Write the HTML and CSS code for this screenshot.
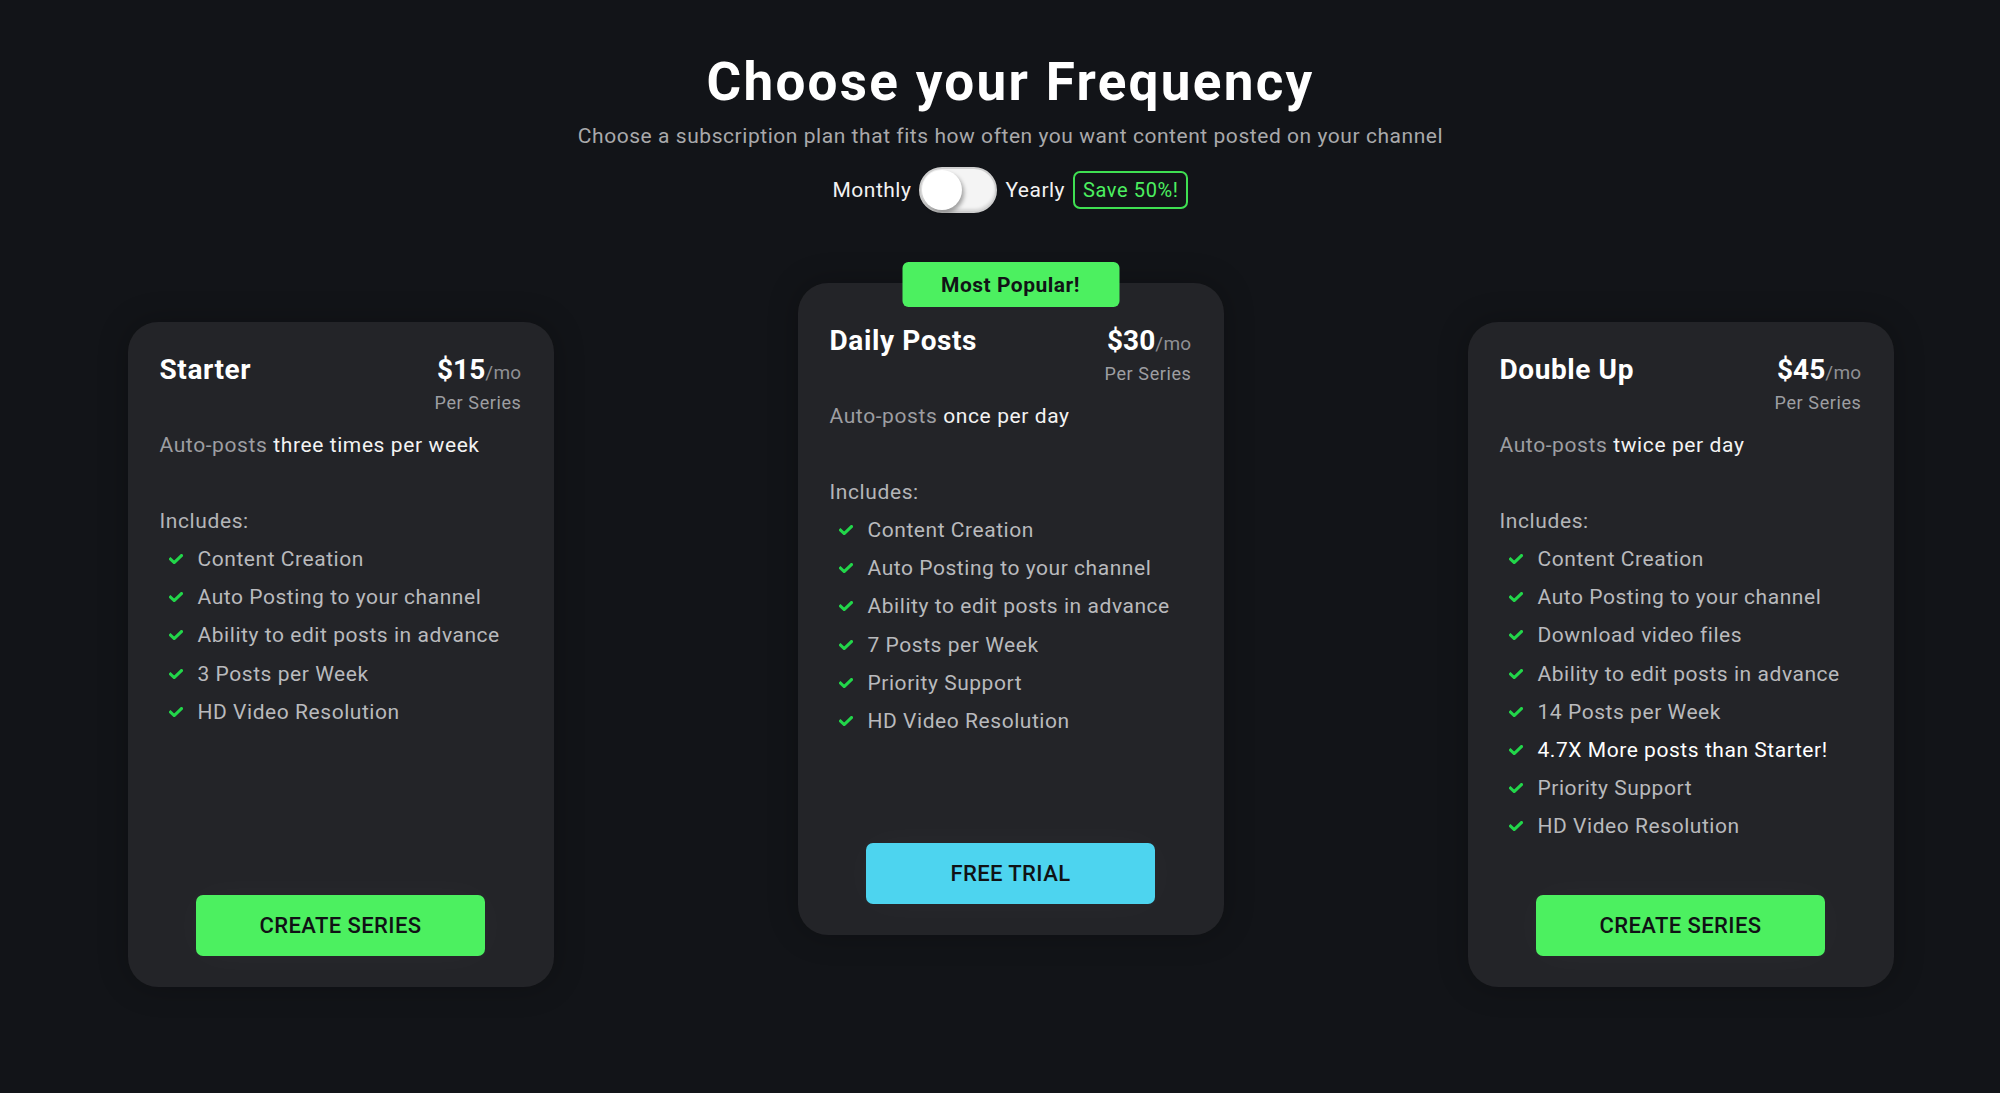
FILE: index.html
```html
<!DOCTYPE html>
<html lang="en">
<head>
<meta charset="utf-8">
<title>Choose your Frequency</title>
<link rel="stylesheet" href="styles.css">
</head>
<body>
<main class="page">
  <header class="hero">
    <h1 class="hero-title">Choose your Frequency</h1>
    <p class="hero-sub">Choose a subscription plan that fits how often you want content posted on your channel</p>
    <div class="billing">
      <span class="billing-label">Monthly</span>
      <span class="switch"><span class="switch-knob"></span></span>
      <span class="billing-label">Yearly</span>
      <span class="save">Save 50%!</span>
    </div>
  </header>

  <section class="plans">
    <article class="plan plan-side">
      <div class="plan-head">
        <h2 class="plan-name">Starter</h2>
        <div class="plan-price">
          <div class="price-line"><span class="price-amt">$15</span><span class="price-per">/mo</span></div>
          <div class="price-note">Per Series</div>
        </div>
      </div>
      <p class="plan-desc"><span class="muted">Auto-posts</span> three times per week</p>
      <p class="plan-inc">Includes:</p>
      <ul class="features">
        <li class="feature"><svg class="check" viewBox="0 0 14 10"><path d="M1.5 5.2 L5.2 8.6 L12.5 1.5"/></svg>Content Creation</li>
        <li class="feature"><svg class="check" viewBox="0 0 14 10"><path d="M1.5 5.2 L5.2 8.6 L12.5 1.5"/></svg>Auto Posting to your channel</li>
        <li class="feature"><svg class="check" viewBox="0 0 14 10"><path d="M1.5 5.2 L5.2 8.6 L12.5 1.5"/></svg>Ability to edit posts in advance</li>
        <li class="feature"><svg class="check" viewBox="0 0 14 10"><path d="M1.5 5.2 L5.2 8.6 L12.5 1.5"/></svg>3 Posts per Week</li>
        <li class="feature"><svg class="check" viewBox="0 0 14 10"><path d="M1.5 5.2 L5.2 8.6 L12.5 1.5"/></svg>HD Video Resolution</li>
      </ul>
      <button class="cta cta-green">CREATE SERIES</button>
    </article>

    <article class="plan plan-main">
      <div class="badge">Most Popular!</div>
      <div class="plan-head">
        <h2 class="plan-name">Daily Posts</h2>
        <div class="plan-price">
          <div class="price-line"><span class="price-amt">$30</span><span class="price-per">/mo</span></div>
          <div class="price-note">Per Series</div>
        </div>
      </div>
      <p class="plan-desc"><span class="muted">Auto-posts</span> once per day</p>
      <p class="plan-inc">Includes:</p>
      <ul class="features">
        <li class="feature"><svg class="check" viewBox="0 0 14 10"><path d="M1.5 5.2 L5.2 8.6 L12.5 1.5"/></svg>Content Creation</li>
        <li class="feature"><svg class="check" viewBox="0 0 14 10"><path d="M1.5 5.2 L5.2 8.6 L12.5 1.5"/></svg>Auto Posting to your channel</li>
        <li class="feature"><svg class="check" viewBox="0 0 14 10"><path d="M1.5 5.2 L5.2 8.6 L12.5 1.5"/></svg>Ability to edit posts in advance</li>
        <li class="feature"><svg class="check" viewBox="0 0 14 10"><path d="M1.5 5.2 L5.2 8.6 L12.5 1.5"/></svg>7 Posts per Week</li>
        <li class="feature"><svg class="check" viewBox="0 0 14 10"><path d="M1.5 5.2 L5.2 8.6 L12.5 1.5"/></svg>Priority Support</li>
        <li class="feature"><svg class="check" viewBox="0 0 14 10"><path d="M1.5 5.2 L5.2 8.6 L12.5 1.5"/></svg>HD Video Resolution</li>
      </ul>
      <button class="cta cta-cyan">FREE TRIAL</button>
    </article>

    <article class="plan plan-side">
      <div class="plan-head">
        <h2 class="plan-name">Double Up</h2>
        <div class="plan-price">
          <div class="price-line"><span class="price-amt">$45</span><span class="price-per">/mo</span></div>
          <div class="price-note">Per Series</div>
        </div>
      </div>
      <p class="plan-desc"><span class="muted">Auto-posts</span> twice per day</p>
      <p class="plan-inc">Includes:</p>
      <ul class="features">
        <li class="feature"><svg class="check" viewBox="0 0 14 10"><path d="M1.5 5.2 L5.2 8.6 L12.5 1.5"/></svg>Content Creation</li>
        <li class="feature"><svg class="check" viewBox="0 0 14 10"><path d="M1.5 5.2 L5.2 8.6 L12.5 1.5"/></svg>Auto Posting to your channel</li>
        <li class="feature"><svg class="check" viewBox="0 0 14 10"><path d="M1.5 5.2 L5.2 8.6 L12.5 1.5"/></svg>Download video files</li>
        <li class="feature"><svg class="check" viewBox="0 0 14 10"><path d="M1.5 5.2 L5.2 8.6 L12.5 1.5"/></svg>Ability to edit posts in advance</li>
        <li class="feature"><svg class="check" viewBox="0 0 14 10"><path d="M1.5 5.2 L5.2 8.6 L12.5 1.5"/></svg>14 Posts per Week</li>
        <li class="feature feature-hl"><svg class="check" viewBox="0 0 14 10"><path d="M1.5 5.2 L5.2 8.6 L12.5 1.5"/></svg>4.7X More posts than Starter!</li>
        <li class="feature"><svg class="check" viewBox="0 0 14 10"><path d="M1.5 5.2 L5.2 8.6 L12.5 1.5"/></svg>Priority Support</li>
        <li class="feature"><svg class="check" viewBox="0 0 14 10"><path d="M1.5 5.2 L5.2 8.6 L12.5 1.5"/></svg>HD Video Resolution</li>
      </ul>
      <button class="cta cta-green">CREATE SERIES</button>
    </article>
  </section>
</main>
</body>
</html>
```
FILE: styles.css
```css
* { box-sizing: border-box; }
html, body {
  margin: 0;
  padding: 0;
  background: #121418;
}
body {
  font-family: Roboto, "Noto Sans", "Liberation Sans", sans-serif;
  color: #ffffff;
  min-height: 1093px;
}
.page {
  padding: 50px 0 0 21px;
}
.hero {
  display: flex;
  flex-direction: column;
  align-items: center;
}
.hero-title {
  margin: 0;
  font-size: 53px;
  line-height: 64px;
  font-weight: 700;
  letter-spacing: 2.3px;
  color: #ffffff;
}
.hero-sub {
  margin: 8px 0 0;
  font-size: 21px;
  line-height: 28px;
  color: #a9a9ab;
  letter-spacing: 0.55px;
}
.billing {
  margin-top: 17px;
  display: flex;
  align-items: center;
  height: 46px;
}
.billing-label {
  font-size: 21px;
  line-height: 28px;
  color: #f2f2f2;
  letter-spacing: 0.5px;
}
.switch {
  position: relative;
  width: 78px;
  height: 46px;
  margin: 0 8px 0 8px;
  border-radius: 23px;
  background: #f4f4f4;
  border: 2px solid #cfcfcf;
  box-shadow: inset 0 -2px 3px rgba(0,0,0,0.12);
}
.switch-knob {
  position: absolute;
  left: 1px;
  top: 1px;
  width: 40px;
  height: 40px;
  border-radius: 50%;
  background: #ffffff;
  box-shadow: 2px 3px 4px rgba(0,0,0,0.35);
}
.save {
  margin-left: 8px;
  height: 38px;
  padding: 0 8px;
  display: flex;
  align-items: center;
  border: 2px solid #3fe052;
  border-radius: 7px;
  color: #4cf060;
  font-size: 20px;
  letter-spacing: 0.6px;
}

.plans {
  margin-top: 70px;
  display: flex;
  justify-content: center;
  align-items: flex-start;
  gap: 244px;
}
.plan {
  position: relative;
  width: 426px;
  display: flex;
  flex-direction: column;
  background: #232428;
  border-radius: 30px;
  padding: 31px 32px 31px 32px;
  box-shadow: 0 0 30px rgba(0,0,0,0.25);
}
.plan-side {
  margin-top: 39px;
  height: 665px;
}
.plan-main {
  height: 652px;
  padding-top: 41px;
}
.badge {
  position: absolute;
  top: -21px;
  left: 50%;
  transform: translateX(-50%);
  width: 217px;
  height: 45px;
  border-radius: 6px;
  background: #4cf060;
  color: #111316;
  font-size: 21px;
  font-weight: 700;
  letter-spacing: 0.5px;
  display: flex;
  align-items: center;
  justify-content: center;
}
.plan-head {
  display: flex;
  justify-content: space-between;
  align-items: flex-start;
}
.plan-name {
  margin: 0;
  font-size: 28px;
  line-height: 34px;
  font-weight: 700;
  letter-spacing: 0.6px;
  color: #ffffff;
}
.plan-price {
  text-align: right;
}
.price-line {
  line-height: 34px;
}
.price-amt {
  font-size: 28px;
  font-weight: 700;
  color: #ffffff;
}
.price-per {
  font-size: 19px;
  color: #8f9094;
  letter-spacing: 0.3px;
}
.price-note {
  margin-top: 1px;
  font-size: 18px;
  line-height: 22px;
  letter-spacing: 0.6px;
  color: #9d9ea2;
}
.plan-desc {
  margin: 16px 0 0;
  font-size: 21px;
  line-height: 30px;
  letter-spacing: 0.6px;
  color: #f3f3f3;
}
.muted {
  color: #9d9ea2;
}
.plan-inc {
  margin: 46px 0 0;
  font-size: 21px;
  line-height: 30px;
  letter-spacing: 0.6px;
  color: #b4b5b8;
}
.features {
  list-style: none;
  margin: 8px 0 0;
  padding: 0 0 0 9px;
  display: flex;
  flex-direction: column;
  gap: 8.2px;
}
.feature {
  display: flex;
  align-items: center;
  font-size: 21px;
  line-height: 30px;
  letter-spacing: 0.55px;
  color: #b9babd;
}
.feature-hl {
  color: #ffffff;
}
.check {
  width: 14px;
  height: 10px;
  margin-right: 15px;
  flex: none;
}
.check path {
  fill: none;
  stroke: #22d64a;
  stroke-width: 3;
  stroke-linecap: square;
  stroke-linejoin: miter;
}
.cta {
  margin-top: auto;
  align-self: center;
  width: 289px;
  height: 61px;
  border: none;
  border-radius: 7px;
  font-family: Roboto, "Noto Sans", "Liberation Sans", sans-serif;
  font-size: 22px;
  font-weight: 500;
  letter-spacing: 0.4px;
  color: #101215;
  box-shadow: 0 0 40px rgba(255,255,255,0.03);
}
.cta-green {
  background: #4cf060;
}
.cta-cyan {
  background: #4dd4ef;
}
```
